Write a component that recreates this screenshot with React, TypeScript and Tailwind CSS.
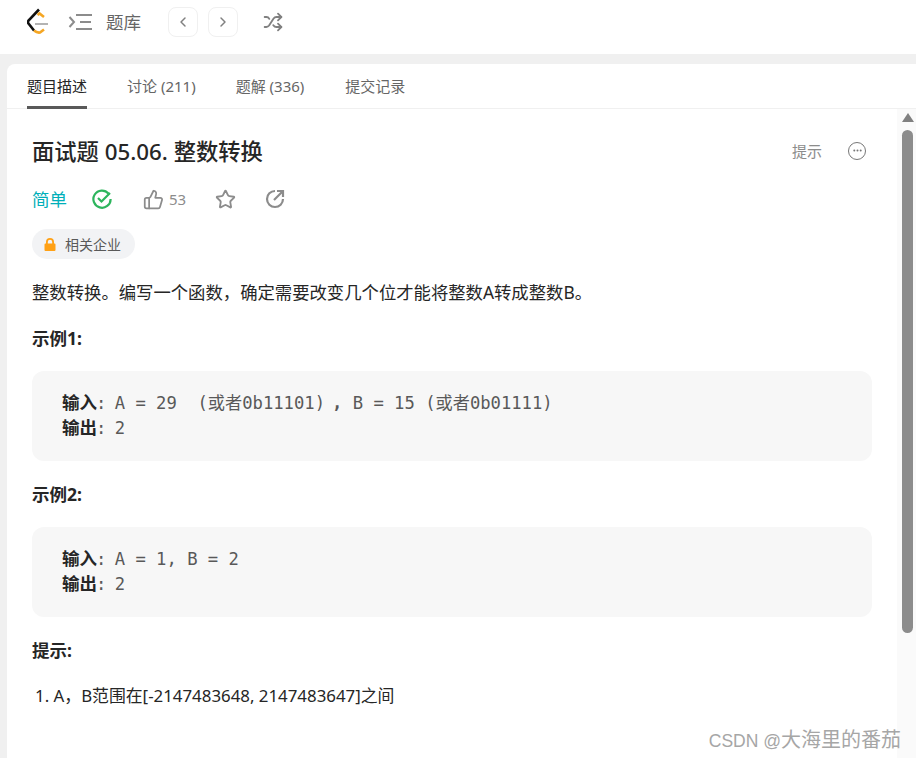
import React from "react";
import { ChevronLeft, ChevronRight, Shuffle, ThumbsUp, Star, Ellipsis } from "lucide-react";

const cjk = { fontFamily: '"Noto Sans", "Noto Sans CJK SC", sans-serif' };

function Example({ a, b }: { a: React.ReactNode; b: string }) {
  return (
    <div className="mt-[18px] h-[90px] rounded-xl bg-[#f7f7f7] pl-[30px] pt-[20px] text-[17.2px] leading-[25px] text-[#595959]" style={{ fontFamily: '"DejaVu Sans Mono", "Noto Sans CJK SC", monospace' }}>
      <div className="whitespace-pre"><b className="mr-[-1px] text-[17.5px] text-[#262626]">输入</b>:<span className="ml-[-2px]"> {a}</span></div>
      <div className="whitespace-pre"><b className="mr-[-1px] text-[17.5px] text-[#262626]">输出</b>:<span className="ml-[-2px]"> {b}</span></div>
    </div>
  );
}

export default function App() {
  return (
    <div className="relative flex h-[758px] w-[916px] flex-col overflow-hidden bg-[#f0f0f0]" style={cjk}>
      <header className="flex h-[54px] shrink-0 items-center bg-white pl-[27px] pb-[10px]">
        <svg width="22" height="28" viewBox="0 0 22 28" fill="none" strokeWidth="2.6">
          <path d="M12 1.5 L1.5 12.5 Q0.5 14 1.5 15.5 L7 22.5" stroke="#111" />
          <path d="M7 22.5 Q10 25 13 24.5 L17 21.5" stroke="#f5a623" />
          <path d="M10.5 7 L12.5 5.5 L17 9" stroke="#f5a623" />
          <path d="M8 16 H21" stroke="#b3b3b3" strokeWidth="2" />
        </svg>
        <svg width="24" height="18" viewBox="0 0 24 18" fill="none" stroke="#8c8c8c" strokeWidth="2" className="ml-[19px]">
          <path d="M1.5 4 L6 9 L1.5 14" />
          <path d="M8 2 H24 M12 9 H23 M8 16 H24" />
        </svg>
        <span className="ml-[14px] text-[17.5px] text-[#666]">题库</span>
        <button className="ml-[27px] flex h-[30px] w-[30px] items-center justify-center rounded-lg border border-[#f0f0f0] text-[#808080]"><ChevronLeft size={16} strokeWidth={2.2} /></button>
        <button className="ml-[10px] flex h-[30px] w-[30px] items-center justify-center rounded-lg border border-[#f0f0f0] text-[#808080]"><ChevronRight size={16} strokeWidth={2.2} /></button>
        <Shuffle size={20} strokeWidth={2.2} className="ml-[25px] text-[#808080]" />
      </header>
      <div className="h-[10px] shrink-0 bg-[#f0f0f0]" />
      <main className="ml-[7px] flex min-h-0 flex-1 flex-col rounded-tl-lg bg-white">
        <nav className="flex h-[45px] shrink-0 items-stretch gap-[40px] border-b border-[#f0f0f0] pl-[20px] text-[15px] text-[#666]">
          <span className="relative flex items-center pt-[1px] text-[#262626]">题目描述<i className="absolute bottom-[-1px] left-0 right-0 h-[3px] bg-[#595959]" /></span>
          <span className="flex items-center pt-[1px]">讨论 (211)</span>
          <span className="flex items-center pt-[1px]">题解 (336)</span>
          <span className="ml-[1px] flex items-center pt-[1px]">提交记录</span>
        </nav>
        <div className="flex min-h-0 flex-1">
          <div className="min-w-0 flex-1 pl-[25px] pr-[25px]">
            <div className="flex h-[46px] items-center justify-between pt-[39px]">
              <h1 className="whitespace-nowrap text-[22.3px] font-medium text-[#262626]">面试题 05.06. 整数转换</h1>
              <div className="mr-[6px] flex items-center gap-[26px] text-[#8c8c8c]">
                <span className="text-[15px]">提示</span>
                <span className="mt-[-2px] flex h-[18px] w-[18px] items-center justify-center rounded-full border-[1.7px] border-[#777] text-[#777]"><Ellipsis size={11} strokeWidth={2.4} /></span>
              </div>
            </div>
            <div className="mt-[30px] flex h-[28px] items-center">
              <span className="text-[17.5px] text-[#00afb9]">简单</span>
              <svg width="20" height="20" viewBox="0 0 20 20" fill="none" stroke="#2db55d" strokeWidth="2.2" className="ml-[25px]">
                <path d="M16.5 4.5 A8.6 8.6 0 1 0 18.6 10" />
                <path d="M6 9 L9.5 12.5 L18 4" />
              </svg>
              <ThumbsUp size={21} strokeWidth={2} className="ml-[31px] text-[#8c8c8c]" />
              <span className="ml-[5px] text-[15px] text-[#8c8c8c]">53</span>
              <Star size={21} strokeWidth={2.1} className="ml-[29px] text-[#8c8c8c]" />
              <svg width="20" height="20" viewBox="0 0 20 20" fill="none" stroke="#8c8c8c" strokeWidth="2.2" className="ml-[29px]">
                <path d="M10 2 A8 8 0 1 0 18 10" />
                <path d="M9 11 L17.5 2.5 M12 2 H18 V8" />
              </svg>
            </div>
            <div className="mt-[16px] flex h-[30px] w-[103px] items-center rounded-full bg-[#f2f3f5] pl-[12px] text-[14px] text-[#595959]">
              <svg width="12" height="13" viewBox="0 0 12 13" fill="#ffa116"><path d="M2 5.5 V4 a4 4 0 0 1 8 0 V5.5 h.5 a1 1 0 0 1 1 1 V12 a1 1 0 0 1 -1 1 h-9 a1 1 0 0 1 -1 -1 V6.5 a1 1 0 0 1 1 -1 z M3.8 5.5 h4.4 V4 a2.2 2.2 0 0 0 -4.4 0 z" /></svg>
              <span className="ml-[9px]">相关企业</span>
            </div>
            <p className="mt-[18px] whitespace-nowrap text-[17.35px] leading-[30px] text-[#262626]">整数转换。编写一个函数，确定需要改变几个位才能将整数A转成整数B。</p>
            <p className="mt-[16px] text-[17.5px] font-bold leading-[30px] text-[#262626]">示例1:</p>
            <Example a={<>A = 29  (或者0b11101)<b className="ml-[7px]">,</b> B = 15 (或者0b01111)</>} b="2" />
            <p className="mt-[18px] text-[17.5px] font-bold leading-[30px] text-[#262626]">示例2:</p>
            <Example a="A = 1, B = 2" b="2" />
            <p className="mt-[18px] text-[17.5px] font-bold leading-[30px] text-[#262626]">提示:</p>
            <p className="mt-[16px] ml-[3px] whitespace-nowrap text-[16.85px] leading-[30px] text-[#262626]">1. A，B范围在[-2147483648, 2147483647]之间</p>
          </div>
          <div className="flex w-[19px] shrink-0 flex-col items-center bg-[#fafafa] pl-[2px]">
            <i className="mt-[4px] h-0 w-0 border-x-[6px] border-b-[9px] border-x-transparent border-b-[#808080]" />
            <i className="mt-[8px] h-[503px] w-[11px] rounded-full bg-[#8c8c8c]" />
          </div>
        </div>
      </main>
      <span className="absolute right-[15px] top-[728px] flex items-baseline text-[17.5px] leading-[24px] text-[#a6a6a6]" style={{ fontFamily: '"Liberation Sans", "Noto Sans CJK SC", sans-serif' }}>CSDN @<span className="text-[20px]">大海里的番茄</span></span>
    </div>
  );
}
